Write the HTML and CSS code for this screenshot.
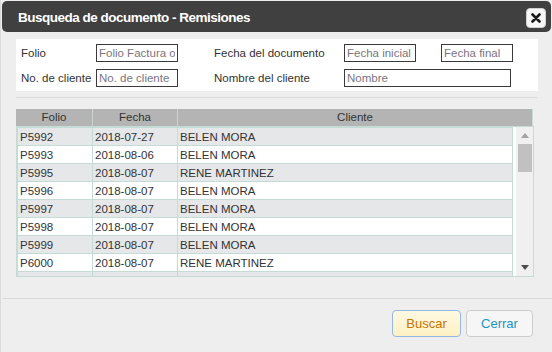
FILE: index.html
```html
<!DOCTYPE html>
<html lang="es">
<head>
  <meta charset="UTF-8" />
  <meta name="viewport" content="width=device-width, initial-scale=1.0" />
  <title>Busqueda de documento - Remisiones</title>
  <link rel="stylesheet" href="styles.css">
</head>
<body>
  <div class="dialog">
    <div class="titlebar">
      <span class="title">Busqueda de documento - Remisiones</span>
      <button class="close-btn" title="Cerrar">
        <svg width="10" height="10" viewBox="0 0 10 10"><path d="M1.5 1.5 L8.5 8.5 M8.5 1.5 L1.5 8.5" stroke="#1a1a1a" stroke-width="2.6" stroke-linecap="round"/></svg>
      </button>
    </div>

    <div class="filters">
      <div class="filter-row">
        <label class="lbl lbl-1">Folio</label>
        <input type="text" class="inp inp-folio" placeholder="Folio Factura o Remisión" />
        <label class="lbl lbl-2">Fecha del documento</label>
        <input type="text" class="inp inp-date" placeholder="Fecha inicial" />
        <input type="text" class="inp inp-date inp-last" placeholder="Fecha final" />
      </div>
      <div class="filter-row">
        <label class="lbl lbl-1">No. de cliente</label>
        <input type="text" class="inp inp-folio" placeholder="No. de cliente" />
        <label class="lbl lbl-2">Nombre del cliente</label>
        <input type="text" class="inp inp-name" placeholder="Nombre" />
      </div>
    </div>
    <div class="sep"></div>

    <div class="grid">
      <div class="grid-head">
        <div class="th">Folio</div>
        <div class="th">Fecha</div>
        <div class="th">Cliente</div>
      </div>
      <div class="grid-body">
        <div class="rows">
          <table>
            <colgroup><col class="c-folio"><col class="c-fecha"><col></colgroup>
            <tbody id="rows"></tbody>
          </table>
        </div>
        <div class="scrollbar">
          <div class="sb-btn">
            <svg width="8" height="5" viewBox="0 0 8 5"><path d="M0 5 L4 0 L8 5 Z" fill="#a3a3a3"/></svg>
          </div>
          <div class="sb-thumb"></div>
          <div class="sb-space"></div>
          <div class="sb-btn">
            <svg width="8" height="5" viewBox="0 0 8 5"><path d="M0 0 L8 0 L4 5 Z" fill="#4d4d4d"/></svg>
          </div>
        </div>
      </div>
    </div>

    <div class="footer">
      <button class="btn btn-primary">Buscar</button>
      <button class="btn">Cerrar</button>
    </div>
  </div>

  <script>
    const docs = [
      ['P5992', '2018-07-27', 'BELEN MORA'],
      ['P5993', '2018-08-06', 'BELEN MORA'],
      ['P5995', '2018-08-07', 'RENE MARTINEZ'],
      ['P5996', '2018-08-07', 'BELEN MORA'],
      ['P5997', '2018-08-07', 'BELEN MORA'],
      ['P5998', '2018-08-07', 'BELEN MORA'],
      ['P5999', '2018-08-07', 'BELEN MORA'],
      ['P6000', '2018-08-07', 'RENE MARTINEZ'],
      ['P6001', '2018-08-07', 'RENE MARTINEZ'],
      ['P6002', '2018-08-08', 'BELEN MORA']
    ];

    const tbody = document.getElementById('rows');
    docs.forEach(d => {
      const tr = document.createElement('tr');
      tr.innerHTML = `<td>${d[0]}</td><td>${d[1]}</td><td>${d[2]}</td>`;
      tbody.appendChild(tr);
    });
  </script>
</body>
</html>
```

FILE: styles.css
```css
* {
  box-sizing: border-box;
}
body {
  margin: 0;
  background: #eeeeee;
  font-family: 'Liberation Sans', Arial, sans-serif;
  color: #333;
}
.dialog {
  width: 552px;
  height: 352px;
  background: #eeeeee;
  border-left: 1px solid #dcdcdc;
  padding-top: 1px;
  overflow: hidden;
}
.titlebar {
  height: 31px;
  margin: 0 1px 0 1px;
  background: #404040;
  border-radius: 5px;
  display: flex;
  align-items: center;
  justify-content: space-between;
  padding: 0 5px 0 16px;
}
.title {
  color: #fff;
  font-weight: bold;
  font-size: 13.5px;
  letter-spacing: -0.5px;
  margin-top: 1px;
}
.close-btn {
  width: 20px;
  height: 20px;
  padding: 0;
  border: 1px solid #d0d0d0;
  border-radius: 4px;
  background: #f6f6f6;
  display: flex;
  align-items: center;
  justify-content: center;
  margin-top: 2px;
}

.filters {
  margin: 7px 14px 0 15px;
  height: 52px;
  background: #fff;
  padding: 5px 0 0 5px;
  display: flex;
  flex-direction: column;
  gap: 7px;
}
.filter-row {
  display: flex;
  align-items: center;
  height: 18px;
}
.lbl {
  font-size: 11.5px;
  color: #333;
}
.lbl-1 {
  width: 75px;
}
.lbl-2 {
  width: 130px;
  margin-left: 36px;
}
.inp {
  height: 18px;
  border: 1px solid #3a3a3a;
  padding: 0 2px;
  font-family: inherit;
  font-size: 11.5px;
  color: #333;
  background: #fff;
  outline: none;
}
.inp::placeholder {
  color: #7c7480;
}
.inp-folio {
  width: 82px;
}
.inp-date {
  width: 72px;
}
.inp-last {
  margin-left: 25px;
}
.inp-name {
  width: 167px;
}
.sep {
  margin: 6px 15px 0 15px;
  height: 1px;
  background: #dadada;
}

.grid {
  margin: 11px 0 0 15px;
  width: 518px;
}
.grid-head {
  display: grid;
  grid-template-columns: 76px 85px 1fr;
  height: 17px;
  width: 517px;
  background: #b4b4b4;
  border-right: 1px solid #c8dcd7;
}
.th {
  font-size: 11.5px;
  line-height: 17px;
  text-align: center;
  color: #333;
  border-left: 1px solid #c9d3d0;
}
.th:first-child {
  border-left: none;
}
.grid-body {
  height: 151px;
  border: 1px solid #c5dbd6;
  display: flex;
  background: #fff;
}
.rows {
  flex: 1;
  overflow: hidden;
}
.rows table {
  width: 100%;
  border-collapse: collapse;
  table-layout: fixed;
}
.c-folio {
  width: 75px;
}
.c-fecha {
  width: 85px;
}
.rows td {
  height: 18px;
  padding: 0 2px;
  border: 1px solid #c5dbd6;
  font-size: 11.5px;
  line-height: 16px;
  color: #333;
  white-space: nowrap;
  overflow: hidden;
}
.rows tr:nth-child(odd) td {
  background: #e6e7e8;
}
.rows tr:nth-child(even) td {
  background: #fff;
}
.scrollbar {
  width: 20px;
  border-left: 3px solid #fff;
  background: #f0f0f0;
  display: flex;
  flex-direction: column;
}
.sb-btn {
  height: 17px;
  display: flex;
  align-items: center;
  justify-content: center;
}
.sb-thumb {
  height: 28px;
  margin: 0 1px 0 2px;
  background: #c1c1c1;
}
.sb-space {
  flex: 1;
}

.footer {
  margin: 21px 0 0 2px;
  border-top: 1px solid #dadada;
  padding: 11px 19px 0 0;
  display: flex;
  justify-content: flex-end;
  gap: 5px;
}
.btn {
  height: 27px;
  width: 67px;
  border: 1px solid #cccccc;
  border-radius: 4px;
  background: #f6f6f6;
  color: #1c94c4;
  font-family: inherit;
  font-size: 13px;
  cursor: pointer;
}
.btn-primary {
  width: 69px;
  background: linear-gradient(#fef9e2, #fdf1c4);
  border-color: #96b6e6;
  color: #c77405;
}
```
